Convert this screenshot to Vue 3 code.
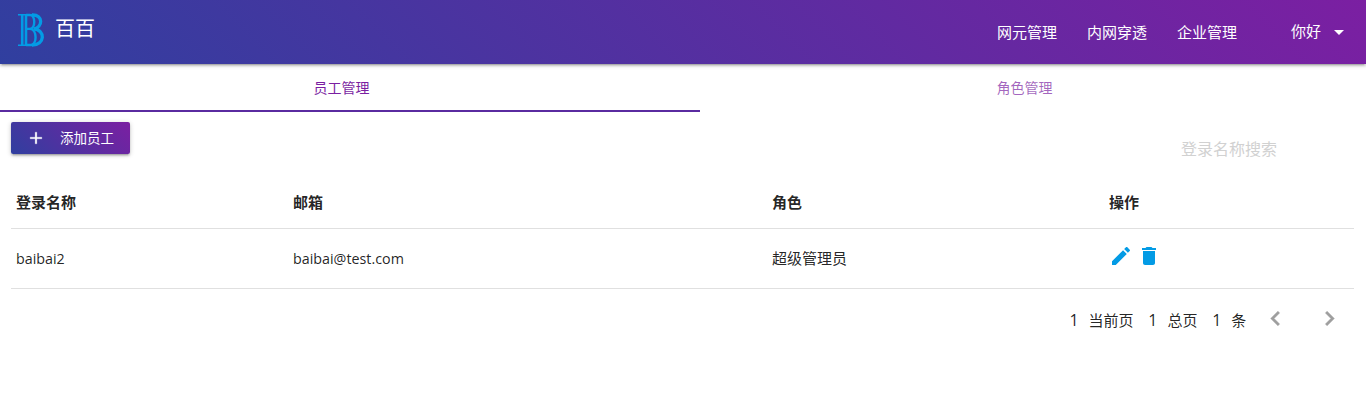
<script setup>
const menu = ['网元管理', '内网穿透', '企业管理']
const headers = ['登录名称', '邮箱', '角色', '操作']
const users = [{ name: 'baibai2', email: 'baibai@test.com', role: '超级管理员' }]
const totals = [
  { value: 1, label: '当前页', kind: 'current' },
  { value: 1, label: '总页', kind: 'pages' },
  { value: 1, label: '条', kind: 'rows' }
]
</script>

<template>
  <div class="page">
    <header class="navbar">
      <svg class="logo" viewBox="0 0 28 34" width="28" height="34">
        <g fill="none" stroke="#039be5">
          <path d="M1 1.7H17M1 32.3H17" stroke-width="1.6" />
          <path d="M5.2 1V33M9 1V33" stroke-width="2.6" />
          <path d="M9 2H13C18.5 2 18.8 15.5 13 15.9H9M13 15.9C20.5 16.5 20 32 14 32H9" stroke-width="2.4" />
          <path d="M15 2C26.6 1.4 26 15 16.5 15.9C29 16.8 28 32.2 15 32.2" stroke-width="3.3" />
        </g>
      </svg>
      <span class="brand">百百</span>
      <nav class="menu">
        <a v-for="item in menu" :key="item">{{ item }}</a>
      </nav>
      <div class="account">
        <span>你好</span>
        <svg viewBox="0 0 24 24" width="24" height="24"><path d="M7 10l5 5 5-5z" /></svg>
      </div>
    </header>

    <div class="tabs">
      <a class="tab active">员工管理</a>
      <a class="tab">角色管理</a>
    </div>
    <div class="indicator"></div>

    <main class="content">
      <div class="toolbar">
        <button class="add">
          <svg viewBox="0 0 24 24" width="20" height="20"><path d="M19 13h-6v6h-2v-6H5v-2h6V5h2v6h6v2z" /></svg>
          <span>添加员工</span>
        </button>
        <input class="search" type="text" placeholder="登录名称搜索" />
      </div>

      <div class="row head">
        <span v-for="h in headers" :key="h">{{ h }}</span>
      </div>
      <div v-for="u in users" :key="u.name" class="row">
        <span class="latin">{{ u.name }}</span>
        <span class="latin">{{ u.email }}</span>
        <span>{{ u.role }}</span>
        <span class="actions">
          <svg viewBox="0 0 24 24" width="24" height="24"><path d="M3 17.25V21h3.75L17.81 9.94l-3.75-3.75L3 17.25zM20.71 7.04c.39-.39.39-1.02 0-1.41l-2.34-2.34c-.39-.39-1.02-.39-1.41 0l-1.83 1.83 3.75 3.75 1.83-1.83z" /></svg>
          <svg viewBox="0 0 24 24" width="24" height="24"><path d="M6 19c0 1.1.9 2 2 2h8c1.1 0 2-.9 2-2V7H6v12zM19 4h-3.5l-1-1h-5l-1 1H5v2h14V4z" /></svg>
        </span>
      </div>

      <footer class="pager">
        <span v-for="t in totals" :key="t.kind" class="total" :class="t.kind"><b>{{ t.value }}</b>{{ t.label }}</span>
        <svg class="prev" viewBox="0 0 24 24" width="29" height="29"><path d="M15.41 7.41L14 6l-6 6 6 6 1.41-1.41L10.83 12z" /></svg>
        <svg viewBox="0 0 24 24" width="29" height="29"><path d="M10 6L8.59 7.41 13.17 12l-4.58 4.59L10 18l6-6z" /></svg>
      </footer>
    </main>
  </div>
</template>

<style>
body {
  background: #fff;
}
</style>

<style scoped>
.page {
  height: 403px;
  overflow: hidden;
  color: rgba(0, 0, 0, 0.87);
  font: 15px/22px "Noto Sans CJK SC", sans-serif;
}
svg {
  display: block;
  flex: none;
}
.navbar {
  display: flex;
  box-sizing: border-box;
  height: 64px;
  padding-left: 17px;
  color: #fff;
  background: linear-gradient(45deg, #303f9f, #7b1fa2);
  box-shadow: 0 2px 2px 0 rgba(0, 0, 0, 0.14), 0 3px 1px -2px rgba(0, 0, 0, 0.12), 0 1px 5px 0 rgba(0, 0, 0, 0.2);
}
.logo {
  margin-top: 13px;
}
.brand {
  margin-left: 10px;
  font-size: 20px;
  line-height: 56px;
}
.menu {
  display: flex;
  gap: 30px;
  margin-left: auto;
  line-height: 64px;
}
.account {
  display: flex;
  width: 76px;
  padding-left: 54px;
  margin-right: -1px;
  line-height: 62px;
}
.account svg {
  margin: 20px 0 0 6px;
  fill: #fff;
}
.tabs {
  display: flex;
  height: 46px;
  font-size: 14px;
  line-height: 47px;
  text-align: center;
}
.tab {
  flex: 1;
  color: rgba(123, 31, 162, 0.7);
}
.tab.active {
  color: #7b1fa2;
}
.indicator {
  width: 700px;
  height: 2px;
  background: #5a2ba0;
}
.content {
  padding: 10px 12px 0 11px;
}
.toolbar {
  display: flex;
  justify-content: space-between;
  align-items: flex-start;
  height: 55px;
}
.add {
  display: flex;
  align-items: center;
  width: 119px;
  height: 32px;
  padding: 0 0 0 15px;
  border: 0;
  border-radius: 2px;
  color: #fff;
  background: linear-gradient(45deg, #303f9f, #7b1fa2);
  box-shadow: 0 2px 2px 0 rgba(0, 0, 0, 0.14), 0 3px 1px -2px rgba(0, 0, 0, 0.12), 0 1px 5px 0 rgba(0, 0, 0, 0.2);
  font: 13.5px/30px "Noto Sans CJK SC", sans-serif;
}
.add span {
  height: 32px;
}
.add svg {
  margin-right: 14px;
  fill: #fff;
  stroke: #fff;
  stroke-width: 0.3;
}
.search {
  width: 173px;
  height: 32px;
  margin-top: 10px;
  padding: 0;
  border: 0;
  outline: 0;
  background: transparent;
  font: 16px/32px "Noto Sans CJK SC", sans-serif;
}
.search::placeholder {
  color: #d1d1d1;
}
.row {
  display: grid;
  grid-template-columns: 277px 479px 337px 1fr;
  box-sizing: border-box;
  height: 60px;
  padding-left: 5px;
  border-bottom: 1px solid #e0e0e0;
  line-height: 57px;
}
.head {
  height: 52px;
  font-weight: 600;
  line-height: 49px;
}
.latin {
  font-family: "Open Sans", sans-serif;
  font-size: 14.3px;
  line-height: 59px;
}
.actions {
  display: flex;
  gap: 4px;
  padding-top: 15px;
  fill: #039be5;
}
.pager {
  display: flex;
  justify-content: flex-end;
  padding: 15px 10px 0 0;
  line-height: 32px;
  fill: #9e9e9e;
  stroke: #9e9e9e;
  stroke-width: 0.4;
}
.total {
  margin-right: 14.7px;
}
.total b {
  margin-right: 10px;
  font: 16px/30px "Open Sans", sans-serif;
}
.prev {
  margin-right: 25px;
}
</style>
